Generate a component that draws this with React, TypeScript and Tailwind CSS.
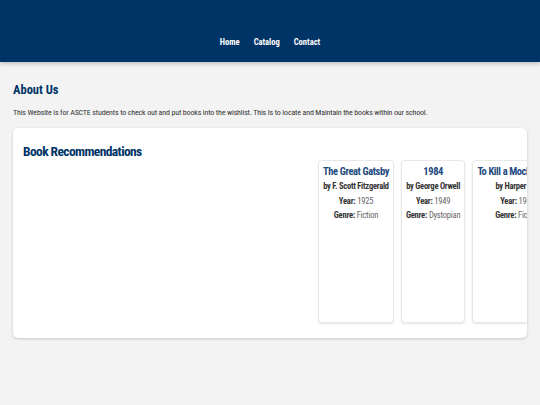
import React from "react";

const books = [
  { title: "The Great Gatsby", author: "F. Scott Fitzgerald", year: "1925", genre: "Fiction" },
  { title: "1984", author: "George Orwell", year: "1949", genre: "Dystopian" },
  { title: "To Kill a Mockingbird", author: "Harper Lee", year: "1960", genre: "Fiction" },
];

const App = () => {
  return (
    <div className="min-h-[405px] bg-[#f3f3f3] text-[#333] font-['Roboto',sans-serif] [font-stretch:condensed]">
      {/* Header */}
      <header className="h-[62px] bg-[#003366] shadow-[0_2px_4px_rgba(0,0,0,0.2)] pt-[37px]">
        <nav className="flex justify-center gap-[14px] text-[8.5px] leading-[10px] font-bold text-white">
          <a>Home</a>
          <a>Catalog</a>
          <a>Contact</a>
        </nav>
      </header>

      <main className="px-[13px] pt-[20px]">
        <h1 className="text-[12.5px] leading-[16px] font-bold text-[#003366]">About Us</h1>
        <p className="mt-[9px] text-[8px] leading-[11px] tracking-[-0.17px] text-[#333]">
          This Website is for ASCTE students to check out and put books into the wishlist. This Is to locate and Maintain the books within our school.
        </p>

        {/* Recommendations */}
        <section className="mt-[10px] h-[210px] overflow-hidden rounded-[5px] bg-white shadow-[0_1px_3px_rgba(0,0,0,0.18)] px-[10px] pt-[15px]">
          <h2 className="text-[13.5px] leading-[16px] font-bold tracking-[-0.6px] text-[#003366]">Book Recommendations</h2>
          <div className="flex gap-[7px] pl-[295px] mt-[1px]">
            {books.map((book, index) => (
              <div
                key={index}
                className="h-[163px] shrink-0 rounded-[4px] border border-[#e8e8e8] bg-white px-[4px] pt-[4px] text-center shadow-[0_1px_2px_rgba(0,0,0,0.1)]"
              >
                <h3 className="text-[10.5px] leading-[14px] font-bold tracking-[-0.4px] text-[#1e4b7f] whitespace-nowrap">{book.title}</h3>
                <p className="text-[8.5px] leading-[14.5px] font-bold tracking-[-0.25px] text-[#333] whitespace-nowrap">by {book.author}</p>
                <p className="text-[8.5px] leading-[14.5px] tracking-[-0.2px] text-[#666]">
                  <span className="font-bold text-[#333]">Year:</span> {book.year}
                </p>
                <p className="text-[8.5px] leading-[14.5px] tracking-[-0.2px] text-[#666]">
                  <span className="font-bold text-[#333]">Genre:</span> {book.genre}
                </p>
              </div>
            ))}
          </div>
        </section>
      </main>
    </div>
  );
};

export default App;
